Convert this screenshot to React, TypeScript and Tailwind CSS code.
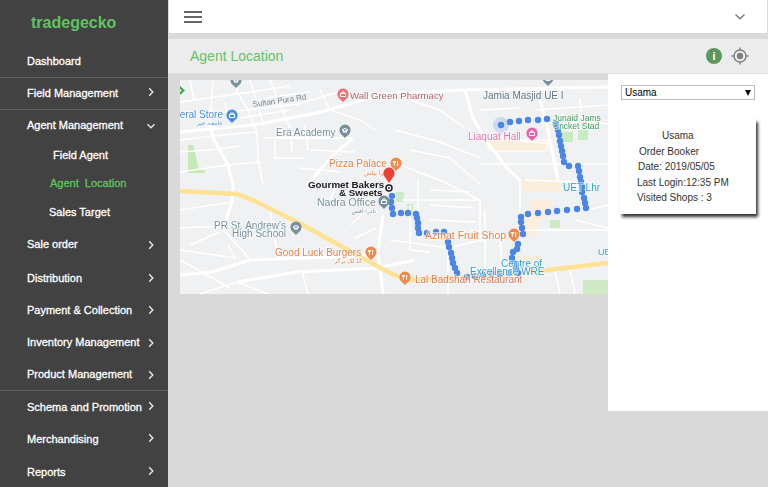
import React from 'react';

const font = "font-['Liberation_Sans',Arial,sans-serif]";
const navText = 'text-[11px] [-webkit-text-stroke:0.3px_currentColor]';

type NavItem = { label: string; h: string; open?: boolean; line?: boolean; lift?: string };

const Chevron = ({ open, lift }: { open?: boolean; lift?: string }) => (
  <svg className={lift} width="12" height="12" viewBox="0 0 12 12" fill="none" stroke="#e8e8e8" strokeWidth="1.4">
    {open ? <path d="M2.5 4.2 6 7.7l3.5-3.5" /> : <path d="M4.2 2.2 7.8 6 4.2 9.8" />}
  </svg>
);

const NavRow = ({ item }: { item: NavItem }) => (
  <div className={`${item.h} ${item.line ? 'border-b border-[#5f5f5f]' : ''} flex items-center pl-[27px] ${navText} text-white`}>
    <span className="w-[118px] whitespace-nowrap">{item.label}</span>
    {item.label !== 'Dashboard' && <Chevron open={item.open} lift={item.lift} />}
  </div>
);

const Sidebar = () => (
  <aside className="w-[168px] shrink-0 h-[487px] overflow-hidden bg-[#424242]">
    <div className="h-[46px] pl-[31px] pt-[12px] text-[16px] leading-[22px] font-bold text-[#5fc45f]">tradegecko</div>
    <NavRow item={{ label: 'Dashboard', h: 'h-[32px]', line: true }} />
    <NavRow item={{ label: 'Field Management', h: 'h-[32px]', line: true, lift: '-mt-[3px]' }} />
    <NavRow item={{ label: 'Agent Management', h: 'h-[31px]', open: true }} />
    <div className={`h-[28px] pl-[53px] flex items-center ${navText} text-white`}>Field Agent</div>
    <div className={`h-[28px] pl-[50px] flex items-center ${navText} text-[#5fc45f] whitespace-pre`}>Agent  Location</div>
    <div className={`h-[30px] pl-[49px] flex items-center ${navText} text-white`}>Sales Target</div>
    <NavRow item={{ label: 'Sale order', h: 'h-[35px]' }} />
    <NavRow item={{ label: 'Distribution', h: 'h-[32px]' }} />
    <NavRow item={{ label: 'Payment & Collection', h: 'h-[32px]' }} />
    <NavRow item={{ label: 'Inventory Management', h: 'h-[33px]' }} />
    <NavRow item={{ label: 'Product Management', h: 'h-[32px]', line: true }} />
    <NavRow item={{ label: 'Schema and Promotion', h: 'h-[32px]', lift: '-mt-[3px]' }} />
    <NavRow item={{ label: 'Merchandising', h: 'h-[33px]', lift: '-mt-[3px]' }} />
    <NavRow item={{ label: 'Reports', h: 'h-[32px]', lift: '-mt-[3px]' }} />
  </aside>
);

// white street lines of the map, in map coordinates
const bigRoads = [
  '0,52 73,45 137,33 190,18 215,13 287,10 428,7',
  '30,45 33,58 48,85 53,105 52,122 43,148',
  '285,10 293,38 307,62 327,88 340,100',
  '203,135 198,172 203,214',
  '212,108 211,130',
  '173,58 153,75 127,105',
  '0,195 33,192 70,180 157,177 187,175',
  '57,202 117,192 197,188 235,180',
  '360,20 366,40 372,70 378,100',
];

const smallRoads = [
  '57,0 57,12 67,28 77,52 78,78 83,105',
  '33,0 30,45',
  '0,22 57,14 110,6',
  '0,38 65,30 118,24 165,10',
  '0,60 33,56 76,52',
  '0,72 30,70 60,66',
  '0,92 48,85 80,82',
  '10,0 14,20',
  '70,0 78,26 84,46',
  '45,22 48,40',
  '60,38 110,30',
  '85,18 130,12',
  '83,58 170,58',
  '95,60 95,78 125,78',
  '110,50 112,72',
  '125,45 128,70',
  '90,0 100,24 110,48',
  '140,10 150,30 180,40 195,50',
  '130,70 175,72',
  '120,88 160,92',
  '0,130 52,122',
  '0,148 40,146 62,170 70,180',
  '10,165 40,152',
  '0,170 55,178 48,165',
  '20,214 57,202 88,214',
  '0,180 50,208',
  '122,192 128,214',
  '90,130 98,178',
  '185,108 185,130 198,132',
  '150,120 160,100',
  '170,145 188,130',
  '175,158 196,148',
  '230,20 260,30 285,48',
  '215,50 260,62 300,78',
  '230,70 270,78 300,104',
  '220,85 260,100 300,120 300,160',
  '222,120 300,120',
  '230,125 230,170 250,172',
  '238,100 238,160',
  '250,110 290,112',
  '250,125 295,128',
  '250,140 295,142',
  '268,155 268,214',
  '210,160 268,168 345,150 428,150',
  '305,130 305,190',
  '340,100 340,140',
  '300,84 428,84',
  '355,30 428,25',
  '400,18 402,40 428,44',
  '375,190 380,214',
  '290,150 320,155 322,190',
  '340,28 300,30',
  '330,60 372,64',
  '345,100 400,102 408,128',
  '395,140 428,148',
  '390,190 395,214',
  '408,130 428,125',
];

const route = [
  [330,42],[339,41],[348,40],[358,40],[367,39],[376,44],[378,50],[379,55],[380,61],[381,66],[382,71],[383,76],[384,82],
  [389,86],[398,86],[399,91],[400,97],[401,102],[402,107],[402,112],[404,118],[405,123],[406,128],[397,129],[387,130],
  [377,131],[368,132],[358,133],[348,134],[341,137],[341,142],[342,148],[343,154],[338,164],[337,169],[333,172],[332,178],
  [334,183],[336,188],[338,193],[329,193],[320,194],[312,194],[303,195],[295,196],[287,197],[277,193],[275,188],[273,183],
  [272,178],[271,173],[269,167],[268,162],[264,152],[256,152],[247,153],[239,153],[238,148],[238,143],[237,138],[236,134],
  [228,133],[221,133],[213,134],[212,128],[211,122],[212,116],
];

const glyphs = {
  food: 'M-1.6-3v5M-2.6-3v1.6h2V-3M1.6-3v5',
  school: 'M-3-1.2 0-2.6l3 1.4L0 .2ZM-1.6 0v1.2h3.2V0',
  shop: 'M-2.6-1.5h5.2v3h-5.2ZM-1.2-1.5V-3h2.4v1.5',
  mosque: 'M-2 1.5h4v-2a2 2 0 0 0-4 0Z',
};

const Pin = ({ x, y, fill, glyph }: { x: number; y: number; fill: string; glyph?: keyof typeof glyphs }) => (
  <g transform={`translate(${x} ${y})`}>
    <path d="M0 7-3.6 3.4A5.6 5.6 0 1 1 3.6 3.4Z" fill={fill} />
    {glyph && <path d={glyphs[glyph]} stroke="#fff" strokeWidth="1" fill="none" />}
  </g>
);

const Label = ({ x, y, fill, size = 10, weight, anchor, children }: { x: number; y: number; fill: string; size?: number; weight?: number; anchor?: 'end' | 'middle'; children: React.ReactNode }) => (
  <text x={x} y={y} fill={fill} fontSize={size} fontWeight={weight} textAnchor={anchor} stroke="#fff" strokeWidth="1.6" paintOrder="stroke" strokeOpacity=".7">{children}</text>
);

const MapPicture = () => (
  <svg width="428" height="214" viewBox="0 0 428 214" className="block blur-[0.3px]" fontFamily="'Liberation Sans', 'DejaVu Sans', sans-serif">
    <rect width="428" height="214" fill="#f0f1f3" />
    {/* parks and buildings */}
    <path d="M8 65h5l6 25h6v3H8Z" fill="#c6e8b4" />
    <path d="M382 52h11v10h-11ZM398 50h10v10h-10Z" fill="#c8ecc0" />
    <path d="M216 112h8v10h-8ZM233 124h-6l2 14h3Z" fill="#cdeac4" />
    <path d="M350 120h20l4 14-20 8h-4Z M344 136h14v20h-14Z" fill="#fbeedd" />
    <path d="M403 200h25v14h-25Z M370 140h10v8h-10Z" fill="#cfe9c4" />
    <rect x="308" y="60" width="60" height="11" rx="3" fill="#fbeedd" stroke="#fff" />
    <rect x="342" y="98" width="40" height="14" rx="2" fill="#fbeedd" />
    <rect x="335" y="176" width="26" height="16" fill="#fbeedd" />
    {/* streets */}
    {smallRoads.map((p, i) => (
      <polyline key={i} points={p} fill="none" stroke="#fff" strokeWidth="1.5" />
    ))}
    {bigRoads.map((p, i) => (
      <polyline key={i} points={p} fill="none" stroke="#fff" strokeWidth="3" />
    ))}
    <polyline points="0,111 57,114 77,122 123,145 177,175 210,193 227,200 277,198 343,193 428,183" fill="none" stroke="#fde293" strokeWidth="4.5" />
    {/* route */}
    <circle cx="321" cy="45" r="8" fill="#aac4f2" fillOpacity=".5" />
    <circle cx="321" cy="45" r="3.2" fill="#4a86e8" />
    {route.map(([x, y], i) => (
      <circle key={i} cx={x} cy={y} r="3.2" fill="#4a86e8" />
    ))}
    <path d="M0 6 5 10.500 0 15v-3l2-1.500-2-1.500Z" fill="#34a853" />
    {/* labels */}
    <Pin x={163} y={15} fill="#ee6e73" glyph="shop" />
    <Label x={170} y={19} size={9.6} fill="#b5616a">Wall Green Pharmacy</Label>
    <Pin x={56} y={1} fill="#78909c" glyph="school" />
    <Pin x={52} y={36} fill="#4a90e2" glyph="shop" />
    <Label x={43} y={38} anchor="end" fill="#4a90d9">eral Store</Label>
    <Label x={43} y={45} anchor="end" fill="#4a90d9" size={6}>جامعہ خیر</Label>
    <text x="73" y="27" fontSize="8" fill="#78858c" transform="rotate(-8 73 27)">Sultan Pura Rd</text>
    <Pin x={165} y={51} fill="#78909c" glyph="school" />
    <Label x={96} y={56} fill="#78909c">Era Academy</Label>
    <Pin x={368} y={-1} fill="#78909c" glyph="mosque" />
    <Label x={303} y={19} fill="#607480">Jamia Masjid UE I</Label>
    <Label x={373} y={41} fill="#3a9a5a" size={8.5}>Junaid Jams</Label>
    <Label x={373} y={49} fill="#3a9a5a" size={8.5}>Cricket Stad</Label>
    <Pin x={352} y={54} fill="#ec5fa6" glyph="shop" />
    <Label x={288} y={60} fill="#ec6fb0">Liaquat Hall</Label>
    <Pin x={216} y={84} fill="#f08a4b" glyph="food" />
    <Label x={149} y={87} fill="#e8824a">Pizza Palace</Label>
    <Label x={207} y={95} anchor="end" fill="#e8824a" size={6}>پیزا پیلس</Label>
    <text x="128" y="108" fontSize="9.8" fontWeight="700" fill="#202124">Gourmet Bakers</text>
    <text x="159" y="116" fontSize="9.8" fontWeight="700" fill="#202124">&amp; Sweets</text>
    <Label x={137} y={126} size={10.5} fill="#78909c">Nadra Office</Label>
    <Label x={196} y={133} anchor="end" fill="#78909c" size={6}>نادرا آفس</Label>
    <Pin x={204} y={122} fill="#78909c" glyph="shop" />
    <Label x={106} y={149} anchor="end" fill="#78909c">PR St. Andrew's</Label>
    <Label x={106} y={157} anchor="end" fill="#78909c">High School</Label>
    <Pin x={116} y={148} fill="#78909c" glyph="school" />
    <Label x={95} y={176} fill="#e8824a">Good Luck Burgers</Label>
    <Label x={182} y={183} anchor="end" fill="#e8824a" size={6}>گڈ لک برگر</Label>
    <Pin x={191} y={173} fill="#f08a4b" glyph="food" />
    <Label x={245} y={159} size={10.5} fill="#e8824a">Azmat Fruit Shop</Label>
    <Pin x={334} y={155} fill="#f08a4b" glyph="food" />
    <Label x={235} y={203} fill="#d9775a">Lal Badshah Restaurant</Label>
    <Pin x={225} y={198} fill="#f08a4b" glyph="food" />
    <Label x={321} y={187} fill="#2a9fd6">Centre of</Label>
    <Label x={290} y={195} fill="#2a9fd6">Excellence WRE</Label>
    <Label x={383} y={111} fill="#2a9fd6">UET Lhr</Label>
    <Label x={418} y={175} size={9} fill="#2a9fd6">UE</Label>
    {/* red marker */}
    <path d="M209 103 204.500 96.500A5.600 5.600 0 1 1 213.500 96.500Z" fill="#ea4335" />
    <circle cx="209" cy="108" r="3" fill="#fff" stroke="#202124" strokeWidth="1.6" />
    <circle cx="209" cy="108" r="1" fill="#202124" />
  </svg>
);

const TopBar = () => (
  <div className="h-[33px] ml-px mr-px bg-white flex items-center justify-between pl-[15px] pr-[21px]">
    <svg width="18" height="12" viewBox="0 0 18 12" fill="#666">
      <rect width="18" height="2" y="0" />
      <rect width="18" height="2" y="5" />
      <rect width="18" height="2" y="10" />
    </svg>
    <svg width="12" height="12" viewBox="0 0 12 12" fill="none" stroke="#777" strokeWidth="1.3">
      <path d="M1.5 3.5 6 7.8l4.500-4.300" />
    </svg>
  </div>
);

const PageHeader = () => (
  <div className="mt-[6px] h-[35px] bg-[#ececec] border-b border-[#dddddd] flex items-center justify-between pl-[22px] pr-[19px]">
    <span className="text-[14px] text-[#62c462]">Agent Location</span>
    <div className="flex items-center gap-[9px]">
      <div className="w-[16px] h-[16px] rounded-full bg-[#5f9660] flex items-center justify-center text-[11px] font-bold leading-none text-white">i</div>
      <svg width="18" height="18" viewBox="0 0 18 18" fill="none" stroke="#808080" strokeWidth="1.4">
        <circle cx="9" cy="9" r="6" />
        <circle cx="9" cy="9" r="3.200" fill="#808080" stroke="none" />
        <path d="M9 .5v3M9 14.500v3M.5 9h3M14.500 9h3" />
      </svg>
    </div>
  </div>
);

const AgentPanel = () => (
  <div className="w-[160px] h-[337px] shrink-0 bg-white pt-[11px]">
    <div className="relative ml-[13px] w-[134px]">
      <select defaultValue="Usama" className="block w-full h-[15px] appearance-none bg-white border border-[#bdbdbd] pl-[3px] text-[10px] leading-none text-black outline-none">
        <option>Usama</option>
      </select>
      <svg className="absolute right-[4px] top-[5px]" width="6" height="6" viewBox="0 0 6 6" fill="#111">
        <path d="M0 0h6L3 6Z" />
      </svg>
    </div>
    <div className="mt-[19px] ml-[12px] w-[136px] h-[95px] bg-white shadow-[2px_3px_3px_#333333] pt-[9px] text-[10px] leading-[15.5px] text-[#333333]">
      <div className="pl-[42px]">Usama</div>
      <div className="pl-[19px]">Order Booker</div>
      <div className="pl-[18px]">Date: 2019/05/05</div>
      <div className="pl-[17px]">Last Login:12:35 PM</div>
      <div className="pl-[17px]">Visited Shops : 3</div>
    </div>
  </div>
);

export default function App() {
  return (
    <div className={`${font} w-[768px] h-[487px] overflow-hidden flex bg-[#d9d9d9]`}>
      <Sidebar />
      <main className="flex-1 min-w-0 flex flex-col">
        <TopBar />
        <PageHeader />
        <div className="flex">
          <div className="flex-1 min-w-0 pl-[12px] pt-[6px]">
            <MapPicture />
          </div>
          <AgentPanel />
        </div>
      </main>
    </div>
  );
}
